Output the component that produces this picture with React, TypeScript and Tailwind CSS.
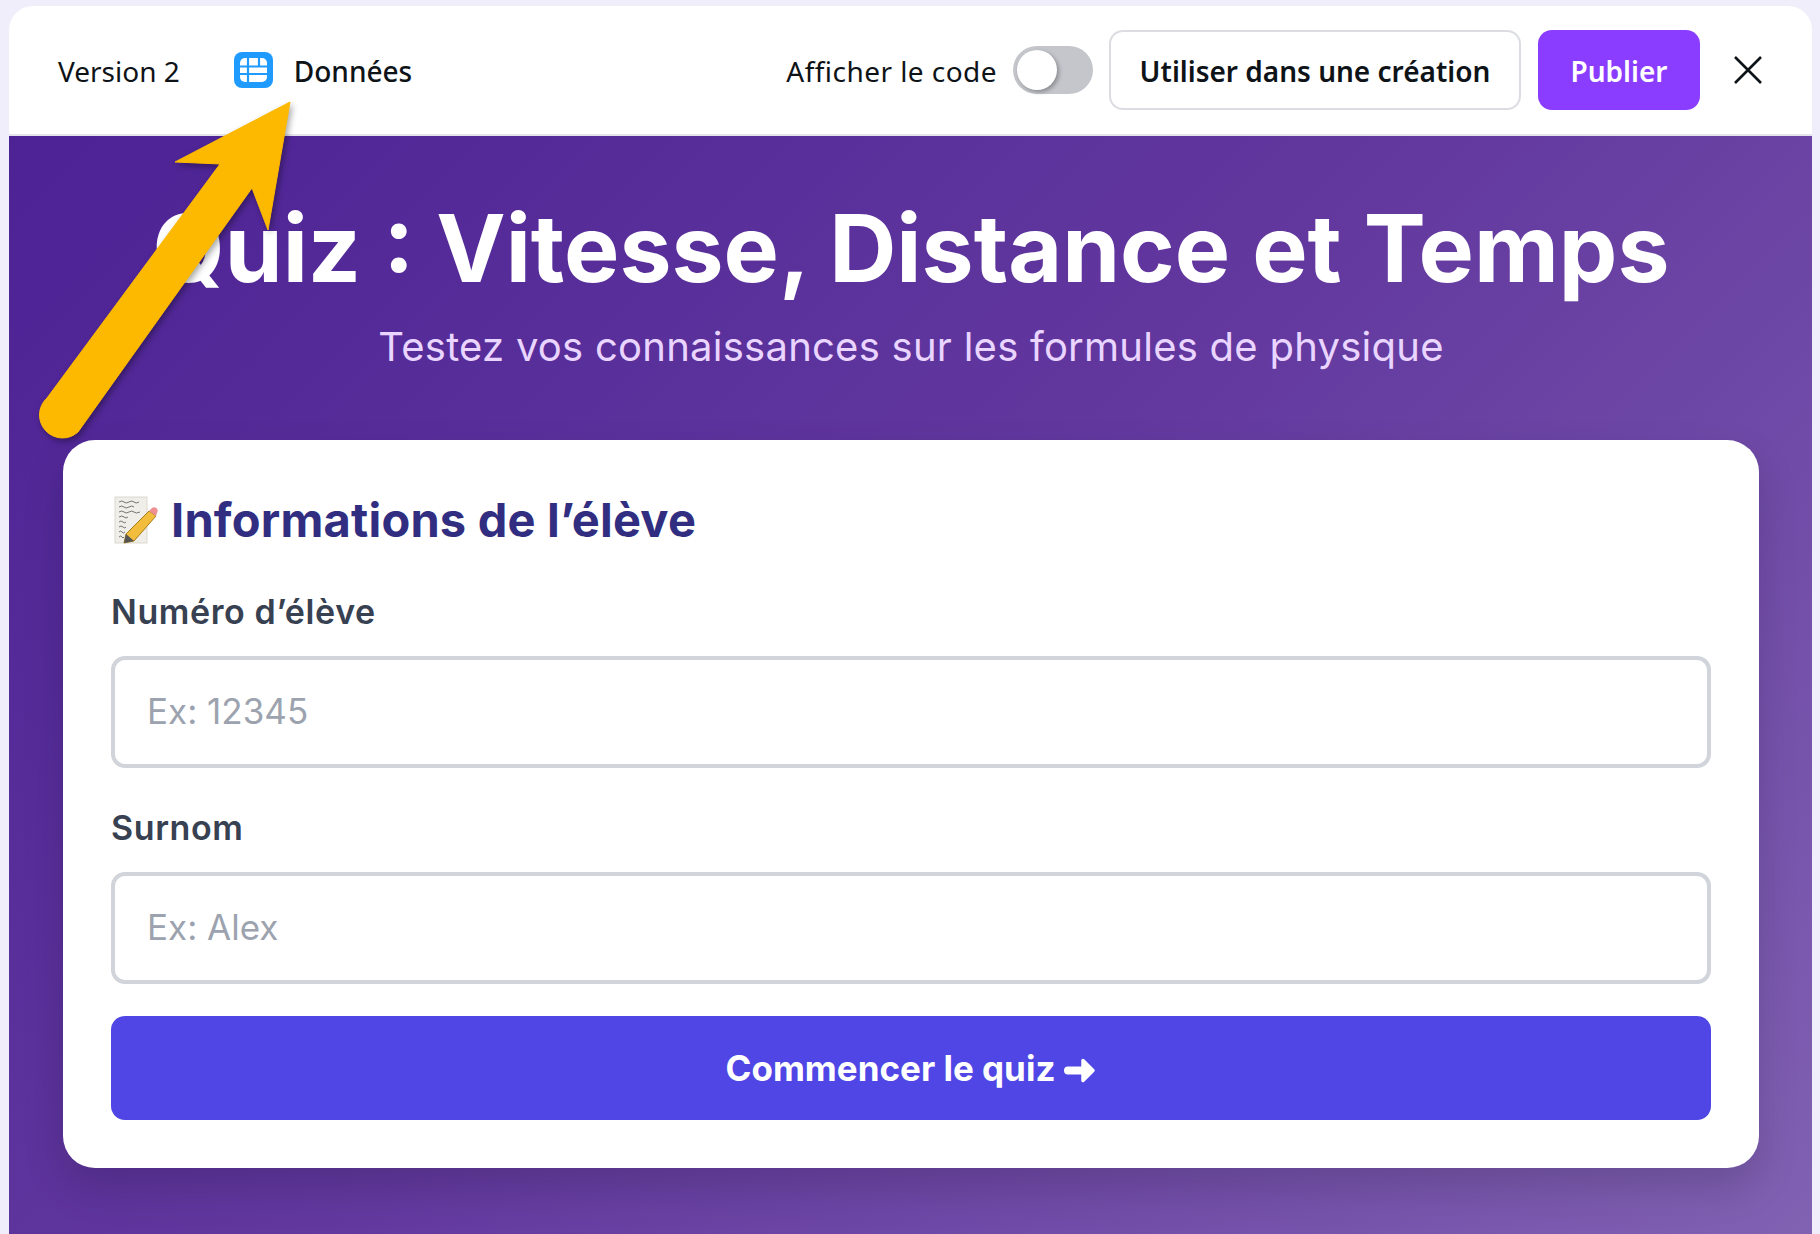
import React from 'react'

const ui = "font-['Noto_Sans',sans-serif]"
const display = "font-['Inter',sans-serif]"

const TableIcon = () => (
  <svg width="39" height="36" viewBox="0 0 39 36" className="shrink-0">
    <rect width="39" height="36" rx="8" fill="#1f9bff" />
    <rect x="6" y="6" width="27" height="24" rx="5" fill="#fff" />
    <path d="M6 14.500h27M6 22h27M14 6v24M25 6v8.500" stroke="#1f9bff" strokeWidth="2.200" fill="none" />
  </svg>
)

const MemoIcon = () => (
  <svg width="44" height="48" viewBox="0 0 44 48" className="shrink-0">
    <rect x="1" y="1" width="32" height="46" fill="#efeee8" stroke="#dcd9cf" />
    <path d="M5 6q3-2 5 0t5 0 5 0 5 0M5 11q3-2 5 0t5 0 5 0M5 16q3-2 5 0t5 0 5 0 6 0M5 21q3-2 5 0t4 0M5 26q2-2 4 0t3 0M5 31q2-2 4 0t3 0M5 36q2-2 3 0t3 0M5 41q2-2 3 0t2 0" stroke="#555" strokeWidth="0.800" fill="none" />
    <path d="M35 15l7 5-22 25-10 2 2-9z" fill="#f2bd3c" stroke="#a97c18" strokeWidth="1" />
    <path d="M35 15l3-3c1.500-1 3-1 4.500 0.300 1.500 1.300 1.500 3 0.500 4.700l-1 3z" fill="#ee8f94" />
    <path d="M10 47l2-9 8 7z" fill="#555" />
  </svg>
)

const ArrowIcon = () => (
  <svg width="32" height="25" viewBox="0 0 32 25" className="ml-[9px] inline-block align-[-2px]">
    <path d="M4 12.500h18" stroke="#fff" strokeWidth="8" strokeLinecap="round" fill="none" />
    <path d="M19 2.500l10 10-10 10z" fill="#fff" stroke="#fff" strokeWidth="3.500" strokeLinejoin="round" />
  </svg>
)

const Field = ({ label, placeholder }: { label: string; placeholder: string }) => (
  <div className="flex flex-col">
    <label className={`${display} h-[38px] pt-[1px] text-[34px] font-semibold leading-[38px] tracking-[0.6px] text-[#374151]`}>{label}</label>
    <div className={`${display} mt-[26px] flex h-[112px] items-center rounded-[14px] border-4 border-[#d1d5db] bg-white pb-[2px] pl-[32px] text-[35px] text-[#9ca3af]`}>
      {placeholder}
    </div>
  </div>
)

export default function App() {
  return (
    <div className="relative h-[1234px] overflow-hidden bg-[#f0eefb] pl-[9px] pr-[8px] pt-[6px]">
      <div className="flex h-full flex-col overflow-hidden rounded-t-[24px] bg-white">
        <header className={`${ui} flex h-[130px] shrink-0 items-center border-b-2 border-[#e4e5ea] text-[28px] text-[#0e1318]`}>
          <span className="ml-[49px] pt-[1px]">Version 2</span>
          <span className="ml-[54px]"><TableIcon /></span>
          <span className="ml-[21px] pt-[1px] font-medium">Données</span>
          <span className="ml-auto pt-[1px] tracking-[0.45px]">Afficher le code</span>
          <div className="ml-[16px] flex h-[48px] w-[80px] items-center rounded-full bg-[#c4c6cc] pl-[4px]">
            <div className="h-[40px] w-[40px] rounded-full bg-white shadow-[2px_2px_4px_rgba(0,0,0,0.3)]" />
          </div>
          <button className="ml-[16px] h-[80px] w-[412px] rounded-[14px] border-2 border-[#dcdde2] bg-white pt-[1px] font-semibold">
            Utiliser dans une création
          </button>
          <button className="ml-[17px] h-[80px] w-[162px] rounded-[14px] bg-[#8b3dff] pt-[1px] font-semibold text-white">
            Publier
          </button>
          <svg width="30" height="30" viewBox="0 0 30 30" className="ml-[33px] mr-[49px] shrink-0">
            <path d="M2 2l26 26M28 2L2 28" stroke="#0e1318" strokeWidth="2.600" fill="none" />
          </svg>
        </header>
        <main className="flex-1 bg-[linear-gradient(135deg,#4c2295,#63399f_50%,#8061b2)] pl-[54px] pr-[53px]">
          <h1 className={`${display} mt-[61px] text-center text-[93px] font-bold leading-[102px] text-white`}>
            Quiz : Vitesse, Distance et Temps
          </h1>
          <p className={`${display} mt-[25px] text-center text-[40px] leading-[46px] tracking-[0.25px] text-[#e9d5ff]`}>
            Testez vos connaissances sur les formules de physique
          </p>
          <section className="mt-[70px] flex h-[728px] flex-col rounded-[32px] bg-white px-[48px] pt-[55px] shadow-[0_20px_40px_rgba(0,0,0,0.15)]">
            <h2 className={`${display} flex h-[50px] items-center gap-[13px] text-[47px] font-bold tracking-[0.2px] text-[#312e81]`}>
              <span className="ml-[3px]"><MemoIcon /></span>
              Informations de l’élève
            </h2>
            <div className="mt-[47px] flex flex-col gap-[40px]">
              <Field label="Numéro d’élève" placeholder="Ex: 12345" />
              <Field label="Surnom" placeholder="Ex: Alex" />
            </div>
            <button className={`${display} mt-[32px] h-[104px] rounded-[14px] bg-[#4f46e5] text-[35px] font-bold text-white`}>
              Commencer le quiz<ArrowIcon />
            </button>
          </section>
        </main>
      </div>
      {/* annotation arrow over the page */}
      <svg width="320" height="460" viewBox="0 0 320 460" className="absolute left-0 top-0 drop-shadow-[2px_3px_3px_rgba(0,0,0,0.35)]">
        <path
          d="M290 102 L175 162 L220 164 L47 398 A20 20 0 0 0 78 432 L252 188 L268 230 Z"
          fill="#fdb900"
          stroke="#fdb900"
          strokeLinejoin="round"
          strokeWidth="1"
        />
      </svg>
    </div>
  )
}
